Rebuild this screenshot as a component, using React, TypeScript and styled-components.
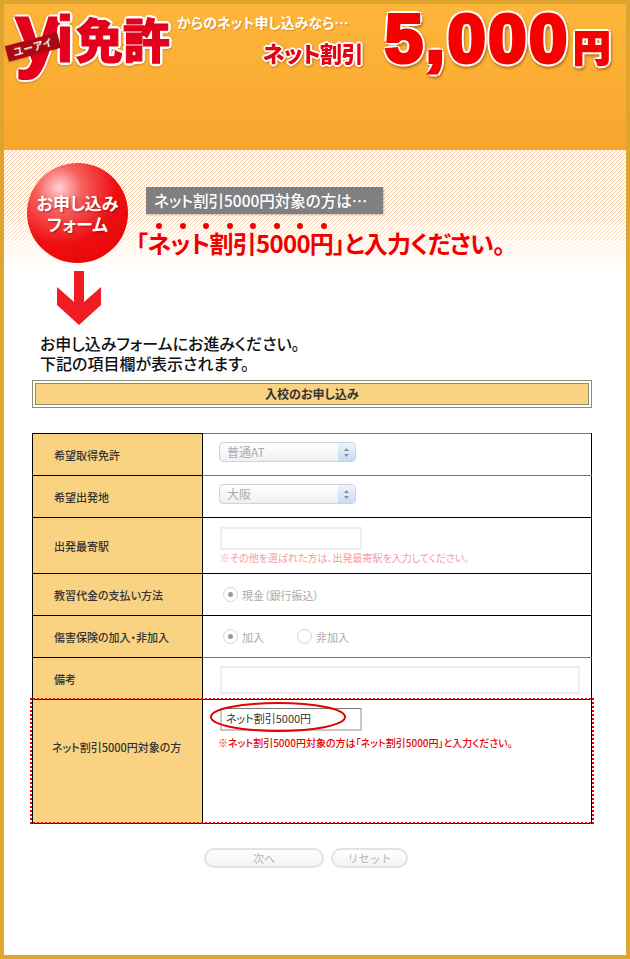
import styled, { createGlobalStyle, css } from "styled-components";

const GlobalStyle = createGlobalStyle`
    html, body {
        margin: 0;
        padding: 0;
        background: #FFFFFF;
    }
    body {
        font-family: "Noto Sans CJK JP", "Liberation Sans", sans-serif;
        font-feature-settings: "palt";
    }
`

// white sticker edge round the heavy red lettering
const sticker = (r: number) => css`
    text-shadow:
        ${r}px 0 0 #FFFFFF, -${r}px 0 0 #FFFFFF, 0 ${r}px 0 #FFFFFF, 0 -${r}px 0 #FFFFFF,
        ${r * 0.7}px ${r * 0.7}px 0 #FFFFFF, -${r * 0.7}px ${r * 0.7}px 0 #FFFFFF,
        ${r * 0.7}px -${r * 0.7}px 0 #FFFFFF, -${r * 0.7}px -${r * 0.7}px 0 #FFFFFF;
`

const Frame = styled.div`
    box-sizing: border-box;
    width: 630px;
    height: 959px;
    border: 4px solid #DFA52F;
    background: #FFFFFF;
    overflow: hidden;
`

const Header = styled.header`
    height: 146px;
    background: linear-gradient(#FDB63B, #F9A62D);
    display: flex;
    align-items: flex-start;
`

const Logo = styled.div`
    position: relative;
    width: 169px;
    height: 80px;
    margin-left: 4px;
    display: flex;
    align-items: flex-start;
    flex-shrink: 0;
    filter: drop-shadow(0 1px 1px rgba(150, 80, 0, 0.4));
`

const LogoY = styled.span`
    font-family: "Liberation Sans", sans-serif;
    font-size: 84px;
    line-height: 56px;
    font-weight: 700;
    color: #E4001B;
    -webkit-text-stroke: 2px #E4001B;
    ${sticker(3)}
    margin-left: 7px;
    margin-top: 1px;
`

const LogoI = styled.span`
    font-family: "Liberation Sans", sans-serif;
    font-size: 66px;
    line-height: 56px;
    font-weight: 700;
    color: #E4001B;
    -webkit-text-stroke: 1px #E4001B;
    ${sticker(3)}
    margin-left: -6px;
    margin-top: 7px;
`

const LogoKanji = styled.span`
    font-size: 47px;
    line-height: 60px;
    font-weight: 900;
    color: #E4001B;
    -webkit-text-stroke: 1px #E4001B;
    ${sticker(3)}
    margin-left: 2px;
    margin-top: 4px;
    white-space: nowrap;
`

const Ribbon = styled.span`
    position: absolute;
    left: -2px;
    top: 35px;
    width: 54px;
    height: 16px;
    background: #A80A14;
    color: #FFFFFF;
    font-size: 10px;
    line-height: 16px;
    font-weight: 700;
    letter-spacing: 1px;
    text-align: center;
    transform: rotate(-15deg);
`

const Pitch = styled.div`
    width: 190px;
    padding-top: 8px;
    display: flex;
    flex-direction: column;
    align-items: flex-end;
    flex-shrink: 0;
`

const PitchLead = styled.p`
    margin: 0;
    align-self: flex-start;
    font-size: 14px;
    line-height: 20px;
    font-weight: 700;
    color: #FFFFFF;
    white-space: nowrap;
    text-shadow: 1px 1px 1px rgba(180, 100, 0, 0.5);
`

const PitchStrong = styled.p`
    margin: 7px 4px 0 0;
    font-size: 22px;
    line-height: 26px;
    font-weight: 900;
    letter-spacing: -0.5px;
    color: #E60012;
    white-space: nowrap;
    ${sticker(2)}
    filter: drop-shadow(1px 1px 1px rgba(150, 80, 0, 0.5));
`

const Amount = styled.div`
    margin-left: 18px;
    display: flex;
    align-items: baseline;
    font-family: "Liberation Sans", sans-serif;
    font-weight: 700;
    color: #F70000;
    filter: drop-shadow(1px 2px 1px rgba(150, 80, 0, 0.6));
    white-space: nowrap;
`

const AmountNumber = styled.span`
    font-size: 68px;
    line-height: 68px;
    letter-spacing: 3px;
    -webkit-text-stroke: 4px #F70000;
    ${sticker(4)}
`

const AmountUnit = styled.span`
    font-family: "Noto Sans CJK JP", sans-serif;
    font-size: 37px;
    font-weight: 900;
    margin-left: 3px;
    -webkit-text-stroke: 2px #F70000;
    ${sticker(3)}
`

const Hero = styled.section`
    height: 120px;
    display: flex;
    align-items: flex-start;
    background:
        linear-gradient(rgba(255, 255, 255, 0) 50%, #FFFFFF 100%),
        repeating-linear-gradient(-45deg, #F6C79B 0 1.1px, #FFFFFF 1.1px 2.83px);
`

const Ball = styled.div`
    width: 101px;
    height: 100px;
    margin: 13px 0 0 23px;
    border-radius: 50%;
    flex-shrink: 0;
    background: radial-gradient(circle at 32% 25%, #FFD3D3 0, #F7615F 22%, #EE0F12 55%, #E60000 100%);
    display: flex;
    align-items: center;
    justify-content: center;
    color: #FFFFFF;
    font-size: 17px;
    line-height: 21px;
    font-weight: 700;
    text-align: center;
    text-shadow: 1px 1px 2px rgba(120, 0, 0, 0.6);
`

const Lead = styled.div`
    display: flex;
    flex-direction: column;
    align-items: flex-start;
    margin-left: 8px;
`

const GrayLabel = styled.p`
    margin: 37px 0 0 10px;
    width: 237px;
    height: 27px;
    box-sizing: border-box;
    padding-left: 8px;
    background: #808080;
    box-shadow: 1px 1px 2px rgba(0, 0, 0, 0.25);
    color: #FFFFFF;
    font-size: 15.5px;
    line-height: 27px;
    font-weight: 500;
    white-space: nowrap;
`

const Dots = styled.div`
    display: flex;
    gap: 17.5px;
    margin: 9px 0 0 20px;
`

const Dot = styled.span`
    width: 6px;
    height: 6px;
    border-radius: 50%;
    background: #F00000;
`

const BigLine = styled.p`
    margin: -1px 0 0;
    font-size: 24px;
    line-height: 30px;
    font-weight: 700;
    letter-spacing: -0.7px;
    color: #EE0000;
    white-space: nowrap;
`

const Main = styled.main`
    padding-left: 28px;
`

const Arrow = styled.svg`
    display: block;
    width: 46px;
    height: 55px;
    margin-left: 24px;
    margin-top: 1px;
`

const Intro = styled.p`
    margin: 7px 0 0 8px;
    font-size: 16px;
    line-height: 20px;
    font-weight: 500;
    color: #111111;
`

const TitleBox = styled.div`
    width: 560px;
    height: 28px;
    box-sizing: border-box;
    margin-top: 7px;
    padding: 2px;
    border: 1px solid #8E8C6E;
`

const Title = styled.h2`
    margin: 0;
    height: 100%;
    box-sizing: border-box;
    border: 1px solid #8E8C6E;
    background: #F9D282;
    color: #333333;
    font-size: 12px;
    line-height: 20px;
    font-weight: 700;
    text-align: center;
`

const FormTable = styled.table`
    width: 560px;
    margin-top: 25px;
    border-collapse: collapse;
    table-layout: fixed;
`

const Row = styled.tr<{ $h: number }>`
    height: ${(p) => p.$h}px;
`

const Label = styled.th<{ $wide?: boolean }>`
    width: 170px;
    box-sizing: border-box;
    padding: 0 0 ${(p) => (p.$wide ? 30 : 0)}px ${(p) => (p.$wide ? 19 : 21)}px;
    border: 1px solid #000000;
    background: #F9D282;
    color: #333333;
    font-size: 11px;
    font-weight: 500;
    text-align: left;
`

const Cell = styled.td<{ $softTop?: boolean; $softBottom?: boolean }>`
    padding: 0 0 0 17px;
    border: 1px solid #000000;
    border-top-color: ${(p) => (p.$softTop ? "#777777" : "#000000")};
    border-bottom-color: ${(p) => (p.$softBottom ? "#777777" : "#000000")};
    vertical-align: middle;
    color: #AAAAAA;
    font-size: 11px;
`

const SelectCell = styled(Cell)`
    padding: 0 0 5px 16px;
`

const MemoCell = styled(Cell)`
    padding-top: 3px;
`

const TopCell = styled(Cell)`
    padding-top: 8px;
    vertical-align: top;
`

const SelectBox = styled.div`
    width: 137px;
    height: 20px;
    box-sizing: border-box;
    display: flex;
    border: 1px solid #CCD3DD;
    border-radius: 4px;
    background: linear-gradient(#FFFFFF, #F0F0F0);
    color: #AAAAAA;
    font-size: 12px;
    line-height: 17px;
    overflow: hidden;
`

const SelectText = styled.span`
    flex: 1;
    padding-left: 7px;
`

const SelectArrows = styled.span`
    width: 17px;
    background: linear-gradient(#EEF3FA, #C6DCF6);
    display: flex;
    align-items: center;
    justify-content: center;
`

const TextBox = styled.div<{ $w: number; $h: number; $active?: boolean }>`
    width: ${(p) => p.$w}px;
    height: ${(p) => p.$h}px;
    box-sizing: border-box;
    border: 2px solid ${(p) => (p.$active ? "#C8C8C8" : "#F0F0F0")};
    border-top-color: ${(p) => (p.$active ? "#777777" : "#EDEDED")};
    border-top-width: ${(p) => (p.$active ? 1 : 2)}px;
    color: #333333;
    font-size: 11px;
    line-height: 18px;
    padding-left: 4px;
`

const Note = styled.p<{ $strong?: boolean }>`
    margin: ${(p) => (p.$strong ? "5px 0 0 -2px" : "1px 0 0 0")};
    color: ${(p) => (p.$strong ? "#E60000" : "#F59AA0")};
    font-size: 10px;
    line-height: 14px;
    font-weight: ${(p) => (p.$strong ? 500 : 400)};
    white-space: nowrap;
`

const RadioRow = styled.div`
    display: flex;
    align-items: center;
    gap: 33px;
    padding-left: 3px;
`

const RadioItem = styled.label`
    display: flex;
    align-items: center;
    gap: 4px;
    color: #AAAAAA;
    font-size: 11px;
`

const Radio = styled.span<{ $on?: boolean }>`
    width: 15px;
    height: 15px;
    box-sizing: border-box;
    border: 1px solid #D4D4D4;
    border-radius: 50%;
    background: #FFFFFF;
    display: flex;
    align-items: center;
    justify-content: center;

    &::after {
        content: "";
        width: 5px;
        height: 5px;
        border-radius: 50%;
        background: ${(p) => (p.$on ? "#999999" : "transparent")};
    }
`

const HighlightWrap = styled.div`
    position: relative;
`

const DottedOutline = styled.div`
    position: absolute;
    left: -2px;
    top: 265px;
    width: 564px;
    height: 126px;
    box-sizing: border-box;
    border: 2px dotted #F00000;
    pointer-events: none;
`

const Oval = styled.svg`
    position: absolute;
    left: 177px;
    top: 268px;
    width: 138px;
    height: 32px;
    pointer-events: none;
`

const Buttons = styled.div`
    display: flex;
    margin-top: 24px;
    margin-left: 172px;
    gap: 7px;
`

const Button = styled.button<{ $w: number }>`
    width: ${(p) => p.$w}px;
    height: 20px;
    padding: 0;
    border: 2px solid #E3E3E3;
    border-radius: 10px;
    background: linear-gradient(#FFFFFF, #F3F3F3);
    color: #B4B4B4;
    font-family: inherit;
    font-size: 11px;
    line-height: 16px;
`

const dots = Array.from({ length: 8 }, (_, i) => i)

const StepArrows = () => (
    <SelectArrows>
        <svg width="7" height="11" viewBox="0 0 7 11"><path d="M3.5 1L6 4H1ZM3.5 10L1 7H6Z" fill="#8A9099" /></svg>
    </SelectArrows>
)

const App = () => {
    return (
        <Frame>
            <GlobalStyle />
            <Header>
                <Logo>
                    <LogoY>y</LogoY>
                    <LogoI>i</LogoI>
                    <LogoKanji>免許</LogoKanji>
                    <Ribbon>ユーアイ</Ribbon>
                </Logo>
                <Pitch>
                    <PitchLead>からのネット申し込みなら…</PitchLead>
                    <PitchStrong>ネット割引</PitchStrong>
                </Pitch>
                <Amount>
                    <AmountNumber>5,000</AmountNumber>
                    <AmountUnit>円</AmountUnit>
                </Amount>
            </Header>
            <Hero>
                <Ball>お申し込み<br />フォーム</Ball>
                <Lead>
                    <GrayLabel>ネット割引5000円対象の方は…</GrayLabel>
                    <Dots>
                        {dots.map((i) => <Dot key={i} />)}
                    </Dots>
                    <BigLine>「ネット割引5000円」と入力ください。</BigLine>
                </Lead>
            </Hero>
            <Main>
                <Arrow viewBox="0 0 46 55">
                    <path d="M18 0H28V31L45 16V34L23 54L1 34V16L18 31Z" fill="#F01C24" />
                </Arrow>
                <Intro>お申し込みフォームにお進みください。<br />下記の項目欄が表示されます。</Intro>
                <TitleBox>
                    <Title>入校のお申し込み</Title>
                </TitleBox>
                <HighlightWrap>
                    <FormTable>
                        <tbody>
                            <Row $h={42}>
                                <Label>希望取得免許</Label>
                                <SelectCell $softTop $softBottom>
                                    <SelectBox>
                                        <SelectText>普通AT</SelectText>
                                        <StepArrows />
                                    </SelectBox>
                                </SelectCell>
                            </Row>
                            <Row $h={42}>
                                <Label>希望出発地</Label>
                                <SelectCell>
                                    <SelectBox>
                                        <SelectText>大阪</SelectText>
                                        <StepArrows />
                                    </SelectBox>
                                </SelectCell>
                            </Row>
                            <Row $h={56}>
                                <Label>出発最寄駅</Label>
                                <Cell>
                                    <TextBox $w={142} $h={23} />
                                    <Note>※その他を選ばれた方は、出発最寄駅を入力してください。</Note>
                                </Cell>
                            </Row>
                            <Row $h={42}>
                                <Label>教習代金の支払い方法</Label>
                                <Cell>
                                    <RadioRow>
                                        <RadioItem><Radio $on />現金（銀行振込）</RadioItem>
                                    </RadioRow>
                                </Cell>
                            </Row>
                            <Row $h={42}>
                                <Label>傷害保険の加入・非加入</Label>
                                <Cell $softBottom>
                                    <RadioRow>
                                        <RadioItem><Radio $on />加入</RadioItem>
                                        <RadioItem><Radio />非加入</RadioItem>
                                    </RadioRow>
                                </Cell>
                            </Row>
                            <Row $h={42}>
                                <Label>備考</Label>
                                <MemoCell>
                                    <TextBox $w={360} $h={28} />
                                </MemoCell>
                            </Row>
                            <Row $h={124}>
                                <Label $wide>ネット割引5000円対象の方</Label>
                                <TopCell>
                                    <TextBox $w={142} $h={23} $active>ネット割引5000円</TextBox>
                                    <Note $strong>※ネット割引5000円対象の方は「ネット割引5000円」と入力ください。</Note>
                                </TopCell>
                            </Row>
                        </tbody>
                    </FormTable>
                    <DottedOutline />
                    <Oval viewBox="0 0 138 32">
                        <ellipse cx="69" cy="16" rx="67" ry="14" fill="none" stroke="#E60000" strokeWidth="2" />
                    </Oval>
                </HighlightWrap>
                <Buttons>
                    <Button $w={120}>次へ</Button>
                    <Button $w={77}>リセット</Button>
                </Buttons>
            </Main>
        </Frame>
    )
}

export default App;
